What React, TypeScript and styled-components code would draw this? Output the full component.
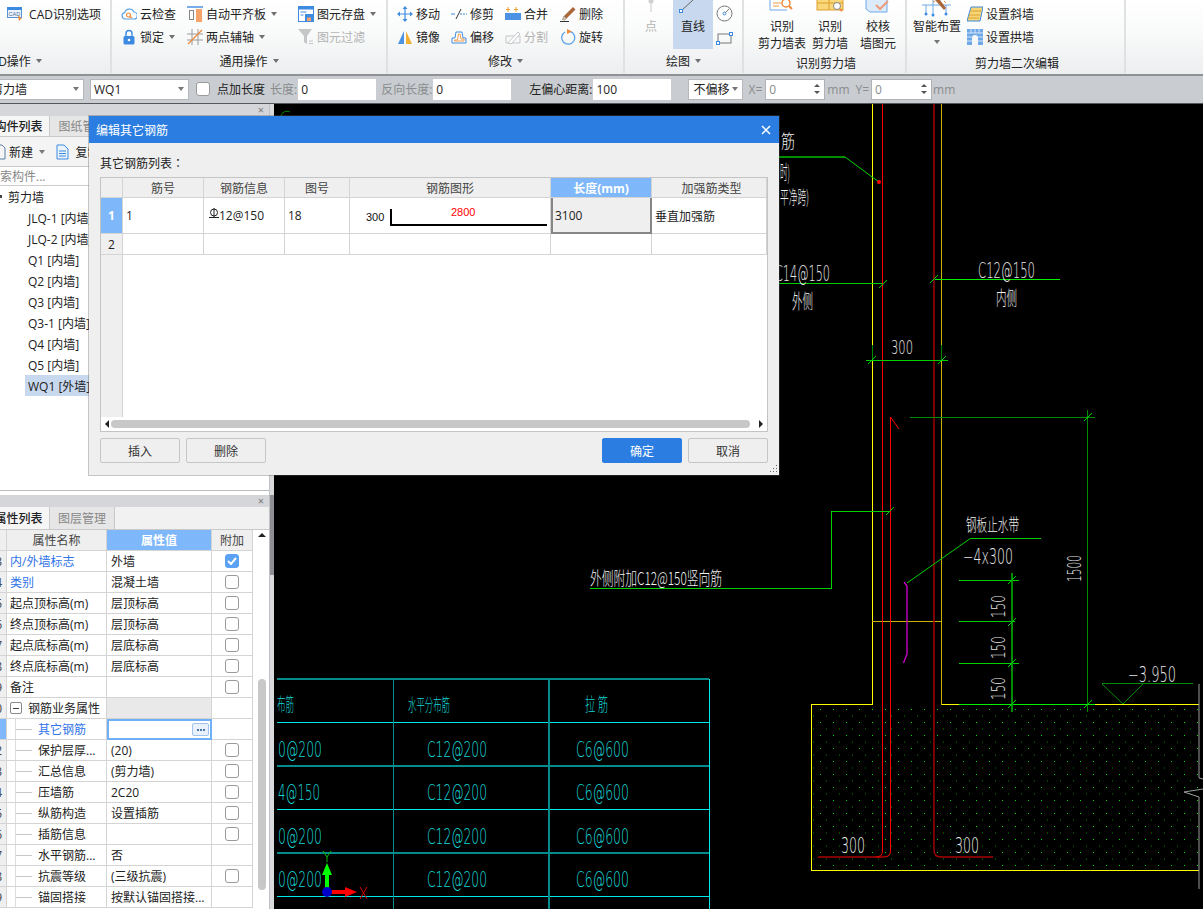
import React from "react";
import styled, { createGlobalStyle } from "styled-components";

const UI_FONT = `"Open Sans", "Noto Sans CJK SC", sans-serif`;

const Global = createGlobalStyle`
  html, body { margin: 0; padding: 0; background: #000; }
  body { font-family: ${UI_FONT}; font-size: 12px; color: #222; }
  * { box-sizing: border-box; }
`;

const Root = styled.div`
  position: relative; width: 1203px; height: 909px; overflow: hidden;
  display: flex; flex-direction: column; background: #000;
`;

/* ---------- ribbon ---------- */
const Ribbon = styled.div`
  display: flex; height: 76px; flex: none;
  background: linear-gradient(#ffffff 0%, #f9fafa 45%, #eceeef 100%);
  border-bottom: 2px solid #8f9194;
`;
const Group = styled.div<{ $w?: number }>`
  width: ${p => (p.$w ? `${p.$w}px` : "auto")}; flex: ${p => (p.$w ? "none" : 1)};
  display: flex; flex-direction: column; height: 73px;
  border-right: ${p => (p.$w ? "2px solid #dfe1e2" : "none")};
  overflow: hidden;
`;
const GroupBody = styled.div`
  height: 49px; flex: none; display: flex; align-items: flex-start;
`;
const GroupLabel = styled.div<{ $drop?: boolean; $shift?: number }>`
  display: flex; align-items: center; justify-content: center; gap: 5px;
  height: 24px; padding-top: ${p => (p.$drop ? 4 : 0)}px; padding-left: ${p => (p.$drop ? 3 : 0)}px; white-space: nowrap;
  margin-left: ${p => p.$shift ?? 0}px; width: ${p => (p.$shift ? "max-content" : "auto")};
`;
const Caret = styled.i<{ $dim?: boolean }>`
  display: inline-block; width: 0; height: 0; flex: none;
  border-left: 3.5px solid transparent; border-right: 3.5px solid transparent;
  border-top: 4px solid ${p => (p.$dim ? "#777" : "#707070")};
`;
const CaretBelow = styled(Caret)`
  margin-top: 5px;
`;
const ToolGrid = styled.div<{ $cols: string; $pad: number }>`
  display: grid; grid-template-columns: ${p => p.$cols};
  padding: 2px 0 0 ${p => p.$pad}px; grid-auto-rows: 23px;
`;
const Tool = styled.div<{ $muted?: boolean }>`
  display: flex; align-items: center; gap: 3px; white-space: nowrap;
  color: ${p => (p.$muted ? "#b4b4b4" : "#222")};
  i { margin-left: 2px; }
`;
const IconBox = styled.span`
  width: 16px; height: 16px; display: flex; align-items: center; justify-content: center; flex: none;
`;
const BigTool = styled.div<{ $w: number; $active?: boolean; $muted?: boolean }>`
  width: ${p => p.$w}px; height: 49px; flex: none;
  display: flex; flex-direction: column; align-items: center;
  background: ${p => (p.$active ? "#c8d9ef" : "transparent")};
  color: ${p => (p.$muted ? "#b4b4b4" : "#222")};
  line-height: 17px; white-space: nowrap;
`;
const BigIcon = styled.svg`
  width: 30px; height: 18px; flex: none; display: block; fill: none;
`;
const ShapeStack = styled.div`
  display: flex; flex-direction: column; gap: 10px; padding: 5px 0 0 3px;
`;
const PointSpacer = styled.div<{ $w?: number }>`
  width: ${p => p.$w ?? 4}px; flex: none;
`;
const Rows = styled.div`
  display: flex; flex-direction: column; padding-top: 2px; margin-left: 4px;
`;
const RowTool = styled(Tool)`
  height: 23px;
`;

/* ---------- option bar ---------- */
const OptionBar = styled.div`
  display: flex; align-items: center; height: 28px; flex: none; padding-bottom: 1px;
  background: #c9ccd0; border-bottom: 1px solid #55575a; white-space: nowrap;
`;
const Combo = styled.div<{ $w: number; $ml: number; $pl?: number }>`
  width: ${p => p.$w}px; margin-left: ${p => p.$ml}px; height: 21px; flex: none;
  background: #fff; border: 1px solid #b5b7ba; padding: 0 4px 0 ${p => p.$pl ?? 3}px;
  display: flex; align-items: center; justify-content: space-between;
  i { border-left-width: 3px; border-right-width: 3px; }
`;
const Check = styled.span<{ $on?: boolean; $ml?: number }>`
  display: flex; align-items: center; justify-content: center; flex: none;
  width: 14px; height: 14px; border-radius: 3px; margin-left: ${p => p.$ml ?? 0}px;
  border: 1px solid ${p => (p.$on ? "#5ba2f5" : "#9a9a9a")};
  background: ${p => (p.$on ? "#5ba2f5" : "#fff")};
`;
const BarLabel = styled.span<{ $muted?: boolean; $ml: number }>`
  margin-left: ${p => p.$ml}px; color: ${p => (p.$muted ? "#8a8c8f" : "#222")};
`;
const BarInput = styled.div<{ $w: number; $ml?: number; $muted?: boolean }>`
  width: ${p => p.$w}px; height: 21px; flex: none; margin-left: ${p => p.$ml ?? 1}px;
  background: #fff; padding: 0 3px; display: flex; align-items: center; justify-content: space-between;
  color: ${p => (p.$muted ? "#8a8c8f" : "#222")};
`;
const SpinBox = styled(BarInput)`
  border: 1px solid #b0b2b5;
`;
const SpinArrows = styled.span`
  display: flex; flex-direction: column; gap: 4px; margin-right: 1px;
  i { display: block; width: 0; height: 0; border-left: 3px solid transparent; border-right: 3px solid transparent; }
  i:first-child { border-bottom: 3px solid #555; }
  i:last-child { border-top: 3px solid #555; }
`;

/* ---------- main ---------- */
const Main = styled.div`
  display: flex; flex: 1; min-height: 0;
`;
const LeftColumn = styled.div`
  width: 269px; flex: none; display: flex; flex-direction: column; background: #fff;
`;
const Splitter = styled.div`
  width: 5px; flex: none; background: #d8dadc; border-left: 1px solid #bfc1c4;
  display: flex; flex-direction: column;
`;
const SplitThumb = styled.div`
  margin-top: 391px; height: 80px; background: #8d8f92;
`;
const Canvas = styled.svg`
  flex: 1; min-width: 0; height: 805px; display: block; background: #000;
`;
const PanelStrip = styled.div`
  height: 12px; flex: none; background: #d4d6da; display: flex; justify-content: flex-end;
  align-items: center; padding-right: 5px; color: #777; font-size: 11px; line-height: 12px;
`;
const Tabs = styled.div<{ $h: number }>`
  height: ${p => p.$h}px; flex: none; display: flex; background: #f1f1f1;
  border-bottom: 1px solid #c9c9c9;
`;
const Tab = styled.div<{ $on?: boolean; $w: number; $shift?: number }>`
  width: ${p => p.$w}px; flex: none; display: flex; align-items: center; justify-content: center;
  background: ${p => (p.$on ? "#f6f6f6" : "#e6e6e6")};
  color: ${p => (p.$on ? "#222" : "#888")}; border-right: 1px solid #c9c9c9;
  font-weight: ${p => (p.$on ? 500 : 400)}; overflow: visible; white-space: nowrap;
  margin-left: ${p => p.$shift ?? 0}px;
`;
const MiniBar = styled.div`
  height: 30px; flex: none; display: flex; align-items: center; background: #f4f4f4;
  border-bottom: 1px solid #c9c9c9; white-space: nowrap;
`;
const MiniGap = styled.span<{ $w: number }>`
  width: ${p => p.$w}px; flex: none;
`;
const SearchBox = styled.div`
  height: 19px; flex: none; display: flex; align-items: center; color: #888; background: #fff;
  border-bottom: 1px solid #ccc; margin-left: -12px; padding-left: 0;
`;
const Tree = styled.div`
  flex: none; height: 305px; background: #fff; display: flex; flex-direction: column;
  border-bottom: 1px solid #bbb;
`;
const TreeRoot = styled.div`
  height: 21px; display: flex; align-items: center; padding-left: 8px; position: relative;
  &::before { content: ""; position: absolute; left: 0; top: 9px; width: 2px; height: 3px; background: #444; }
`;
const TreeItem = styled.div<{ $on?: boolean }>`
  height: 21px; display: flex; align-items: center; padding-left: 3px; margin-left: 25px;
  background: ${p => (p.$on ? "#c8d9ef" : "transparent")}; white-space: nowrap;
`;
const Gap4 = styled.div`
  height: 4px; flex: none; background: #fff;
`;
const PropsArea = styled.div`
  flex: 1; min-height: 0; display: flex; background: #fff; overflow: hidden;
`;
const PropsTable = styled.div`
  width: 253px; flex: none; display: flex; flex-direction: column;
`;
const PropRow = styled.div`
  display: grid; grid-template-columns: 7px 100px 105px 41px; height: 21px; flex: none;
`;
const PropCell = styled.div<{ $bg?: string; $color?: string; $center?: boolean; $bold?: boolean; $pad?: number }>`
  display: flex; align-items: center; white-space: nowrap; overflow: hidden;
  justify-content: ${p => (p.$center ? "center" : "flex-start")};
  padding-left: ${p => p.$pad ?? 0}px;
  background: ${p => p.$bg ?? "#fff"}; color: ${p => p.$color ?? "#222"};
  font-weight: ${p => (p.$bold ? 700 : 400)};
  border-right: 1px solid #d4d4d4; border-bottom: 1px solid #d4d4d4;
`;
const RowNum = styled(PropCell)`
  justify-content: flex-end; padding-right: 4px; overflow: visible; background: ${p => p.$bg ?? "#efefef"};
`;
const Gutter = styled.span`
  width: 9px; height: 21px; flex: none; border-right: 1px solid #ddd;
`;
const Dash = styled.span`
  width: 16px; height: 1px; flex: none; background: #c8c8c8; margin-right: 6px;
`;
const Toggle = styled.span`
  width: 12px; height: 12px; flex: none; margin: 0 6px 0 3px; border: 1px solid #8a8a8a; border-radius: 2px;
  background: #fff; display: flex; align-items: center; justify-content: center;
  &::after { content: ""; width: 6px; height: 1px; background: #444; }
`;
const EditCell = styled.div`
  display: flex; align-items: center; justify-content: flex-end; padding-right: 1px; height: 21px;
  border: 2px solid #6fb0f6; background: #fff;
`;
const DotsBtn = styled.span`
  width: 17px; height: 13px; border: 1px solid #9fc4ee; border-radius: 2px; background: #e8f1fc;
  display: flex; align-items: center; justify-content: center; gap: 1px;
  i { width: 2px; height: 2px; background: #4a78ae; }
`;
const PropScroll = styled.div`
  width: 16px; flex: none; display: flex; flex-direction: column; align-items: center; background: #fff;
  padding-left: 2px;
`;
const ScrollUp = styled.i`
  display: block; width: 0; height: 0; margin-top: 3px;
  border-left: 4px solid transparent; border-right: 4px solid transparent; border-bottom: 4px solid #222;
`;
const ScrollThumb = styled.div`
  width: 8px; height: 211px; margin-top: 142px; border-radius: 4px; background: #c8c8c8;
`;

/* ---------- dialog ---------- */
const Dialog = styled.div`
  position: absolute; left: 89px; top: 116px; width: 690px; height: 359px;
  background: #efefef; display: flex; flex-direction: column;
  box-shadow: 0 0 0 1px rgba(90, 90, 90, 0.35);
`;
const DialogTitle = styled.div`
  height: 27px; flex: none; background: #2b7de1; color: #fff; display: flex; align-items: center;
  justify-content: space-between; padding: 0 8px 0 7px;
`;
const DialogBody = styled.div`
  flex: 1; display: flex; flex-direction: column; padding: 11px 11px 0;
`;
const ListCaption = styled.div`
  height: 18px; line-height: 18px; margin-bottom: 5px;
`;
const WideColon = styled.span`
  font-family: "Noto Sans CJK TC", sans-serif;
`;
const RebarTable = styled.div`
  height: 255px; flex: none; border: 1px solid #c4c4c4; background: #fff; display: flex; flex-direction: column;
`;
const RebarRow = styled.div<{ $h: number }>`
  display: grid; grid-template-columns: 22px 81px 81px 65px 201px 101px 1fr; height: ${p => p.$h}px; flex: none;
`;
const RebarCell = styled.div<{ $head?: boolean; $hot?: boolean; $active?: boolean; $num?: boolean; $nudge?: number }>`
  display: flex; align-items: center; white-space: nowrap; min-width: 0;
  justify-content: ${p => (p.$head || p.$num ? "center" : "flex-start")};
  padding-left: ${p => p.$nudge ?? (p.$head || p.$num ? 0 : 3)}px;
  background: ${p => (p.$hot ? "#7eb8fa" : p.$head || p.$num || p.$active ? "#efefef" : "#fff")};
  color: ${p => (p.$hot ? "#fff" : p.$head ? "#444" : "#222")};
  font-weight: ${p => (p.$hot ? 700 : 400)};
  border-right: 1px solid #d4d4d4; border-bottom: 1px solid #d4d4d4;
  ${p => (p.$active ? "border: 2px solid #868686; border-top: 0; padding-left: 2px;" : "")}
`;
const RebarFill = styled.div`
  flex: 1; display: flex; min-height: 0;
`;
const RebarFillNum = styled.div`
  width: 22px; background: #efefef; border-right: 1px solid #d4d4d4;
`;
const HScroll = styled.div`
  height: 14px; flex: none; display: flex; align-items: center; background: #fff; padding: 0 4px;
`;
const ArrowL = styled.i`
  width: 0; height: 0; flex: none; border-top: 4px solid transparent; border-bottom: 4px solid transparent; border-right: 4px solid #222;
`;
const ArrowR = styled.i`
  width: 0; height: 0; flex: none; border-top: 4px solid transparent; border-bottom: 4px solid transparent; border-left: 4px solid #222;
`;
const HThumb = styled.div`
  height: 8px; flex: 1; margin: 0 9px 0 2px; border-radius: 4px; background: #c8c8c8; max-width: 640px;
`;
const HTrack = styled.div`
  flex: 1; display: flex; align-items: center;
`;
const DialogFoot = styled.div`
  display: flex; justify-content: space-between; margin-top: 6px;
`;
const BtnGroup = styled.div`
  display: flex; gap: 6px;
`;
const DlgBtn = styled.button<{ $primary?: boolean }>`
  width: 80px; height: 25px; padding: 0; border-radius: 2px; font: inherit; font-size: 12px;
  background: ${p => (p.$primary ? "#2b7de1" : "#efefef")};
  color: ${p => (p.$primary ? "#fff" : "#333")};
  border: 1px solid ${p => (p.$primary ? "#2b7de1" : "#c6c6c6")};
`;
const Grip = styled.svg`
  position: absolute; right: 1px; bottom: 1px; width: 10px; height: 10px;
`;
const RebarSymbol = styled.svg`
  width: 10px; height: 11px; flex: none; margin: -4px 0 0 2px;
`;
const ShapeSvg = styled.svg`
  width: 197px; height: 35px; display: block;
`;
const ShapeText = styled.text`
  font-family: "Liberation Sans", sans-serif; font-size: 11px;
`;
const CadLabel = styled.text`
  font-family: "DejaVu Sans", "Noto Sans CJK SC", sans-serif; font-weight: 200;
`;
const CadHan = styled.text`
  font-family: "Noto Sans CJK SC", sans-serif; font-weight: 300;
`;

/* ---------- icons ---------- */
const S: React.FC<React.PropsWithChildren<{ w?: number; h?: number }>> = ({ w = 16, h = 16, children }) => (
  <svg width={w} height={h} viewBox={`0 0 ${w} ${h}`} fill="none">{children}</svg>
);
const IconCad = () => (
  <S h={16}>
    <rect x=".5" y="1.500" width="14" height="10" fill="#eaf2fb" stroke="#5b93d2" />
    <rect x="0" y="1" width="15" height="3" fill="#3d8be0" />
    <text x="1.500" y="10" fontSize="5.500" fontFamily="Liberation Sans, sans-serif" fill="#4d6f99">CAD</text>
    <path d="M11 9l4 4-2 .5-1 2z" fill="#ef8a3c" />
  </S>
);
const IconCloud = () => (
  <S>
    <path d="M4 13a3.200 3.200 0 0 1-.4-6.300A5 5 0 0 1 13 6a3.500 3.500 0 0 1-.5 7z" stroke="#5ba2e6" strokeWidth="1.200" fill="#fff" />
    <circle cx="7.500" cy="9" r="2" stroke="#ef8a3c" strokeWidth="1.200" />
    <path d="M9 10.500l2 1.800" stroke="#ef8a3c" strokeWidth="1.200" />
  </S>
);
const IconLock = () => (
  <S>
    <path d="M5 7V4.500a3 3 0 0 1 6 0V7" stroke="#3d8be0" strokeWidth="1.400" />
    <rect x="2.500" y="7" width="11" height="8.500" rx="1.500" fill="#3d8be0" />
    <circle cx="8" cy="11" r="1.300" fill="#fff" />
  </S>
);
const IconAlign = () => (
  <S>
    <path d="M0 1h16" stroke="#3d8be0" strokeWidth="1.400" />
    <rect x="2.500" y="4.500" width="4" height="9" stroke="#888" fill="#fff" />
    <rect x="9" y="3" width="6" height="13" fill="#f5a26b" />
  </S>
);
const IconAxis = () => (
  <S>
    <path d="M0 5h16M0 11h16M5 0v16M11 0v16" stroke="#9a9a9a" />
    <path d="M1 15L15 1" stroke="#ef8a3c" strokeWidth="1.200" />
  </S>
);
const IconSave = () => (
  <S>
    <rect x=".5" y=".5" width="15" height="15" fill="#fff" stroke="#3d8be0" />
    <rect x="0" y="0" width="16" height="3.500" fill="#3d8be0" />
    <path d="M2.500 6h6M2.500 9h3" stroke="#3d8be0" />
    <rect x="7" y="8" width="8" height="7.500" fill="#3d8be0" />
    <rect x="9" y="11.500" width="4" height="3.500" fill="#f5a26b" />
  </S>
);
const IconFilter = () => (
  <S>
    <path d="M0 0h14L9 7v8l-3-2V7z" fill="#c4c6c8" />
    <path d="M11 12h4M11 14.500h4" stroke="#c4c6c8" />
  </S>
);
const IconMove = () => (
  <S>
    <path d="M8 1v14M1 8h14" stroke="#3d8be0" strokeWidth="1.200" />
    <path d="M8 0l2.500 3h-5zM8 16l2.500-3h-5zM0 8l3-2.500v5zM16 8l-3-2.500v5z" fill="#3d8be0" />
  </S>
);
const IconTrim = () => (
  <S>
    <path d="M0 8h4" stroke="#3d8be0" />
    <path d="M5 13L10 3" stroke="#333" />
    <path d="M9 8h7" stroke="#3d8be0" strokeDasharray="2 1" />
  </S>
);
const IconMerge = () => (
  <S>
    <rect x="0" y="7" width="16" height="7" fill="#4b93e2" />
    <path d="M3 1v5M11 1v5M1 3.500h4M9 3.500h4" stroke="#f0a030" />
  </S>
);
const IconErase = () => (
  <S>
    <path d="M4 10L13 1l2.500 2.500-9 9z" fill="#a9673a" />
    <path d="M4 10l2.500 2.500-2 1.500-2-.5z" fill="#e8c9a8" stroke="#555" strokeWidth=".5" />
    <path d="M0 15.500h9" stroke="#333" />
  </S>
);
const IconMirror = () => (
  <S>
    <path d="M7 2v13H1z" fill="#4b93e2" />
    <path d="M9 2v13h6z" fill="#f2b134" />
  </S>
);
const IconOffset = () => (
  <S>
    <path d="M1 14V9h3l1-6h6l1 6h3v5z" stroke="#3d8be0" fill="#fff" />
    <path d="M3.500 12v-1h3l1-6h1.500l1 5h3v2z" stroke="#ef9a4c" fill="#fff" />
  </S>
);
const IconSplit = () => (
  <S>
    <path d="M1 14V7h14v7z" stroke="#c4c6c8" />
    <path d="M3 14l10-11 2 2L6 15z" stroke="#c4c6c8" fill="#fff" />
  </S>
);
const IconRotate = () => (
  <S>
    <path d="M5 3a6.500 6.500 0 1 0 5-.6" stroke="#5ba2e6" strokeWidth="1.300" />
    <path d="M7 0l5 2.500-5 2.500z" fill="#ef8a3c" />
  </S>
);
const IconCircle = () => (
  <S w={17} h={17}>
    <circle cx="8.500" cy="8.500" r="7.500" stroke="#777" />
    <circle cx="8.500" cy="8.500" r="1.400" stroke="#3d8be0" />
    <path d="M9.500 7.500L13 4" stroke="#777" />
  </S>
);
const IconRect = () => (
  <S w={17} h={13}>
    <rect x="2" y="2" width="13" height="9" stroke="#777" />
    <rect x=".5" y="9.500" width="3" height="3" fill="#fff" stroke="#3d8be0" />
    <rect x="13.500" y=".5" width="3" height="3" fill="#fff" stroke="#3d8be0" />
  </S>
);
const IconSkew = () => (
  <S>
    <path d="M4 1h12l-3 14H0z" fill="#f6d676" stroke="#3d8be0" />
    <path d="M3 5h11M2 9h11M1 12h11" stroke="#e0a030" />
  </S>
);
const IconArch = () => (
  <S>
    <path d="M0 0h16v16h-5V9a3 3 0 0 0-6 0v7H0z" fill="#6ea8e8" />
    <path d="M0 4h16M0 8h5M11 8h5M0 12h5M11 12h5M4 0v4M8 0v4M12 0v4" stroke="#fff" strokeWidth=".7" />
  </S>
);
const CheckMark = () => (
  <svg width="10" height="8" viewBox="0 0 10 8" fill="none"><path d="M1 4l3 3 5-6" stroke="#fff" strokeWidth="2" /></svg>
);
const NewIcon = () => (
  <S w={6} h={16}><path d="M-6 1h8l3 3v11H-6z" stroke="#5b7fa8" /></S>
);
const CopyIcon = () => (
  <S w={13} h={16}>
    <path d="M1 1h7l4 4v10H1z" stroke="#3d8be0" fill="#eaf2fb" />
    <path d="M3 7h7M3 9.500h7M3 12h7" stroke="#3d8be0" />
  </S>
);

/* ---------- CAD text helper ---------- */
type CT = { x: number; y: number; w: number; s: number; c?: string; r?: boolean; children: React.ReactNode };
const T: React.FC<CT> = ({ x, y, w, s, c = "#e8e8e8", r, children }) => (
  <CadLabel
    x={r ? 0 : x} y={r ? 0 : y} fontSize={s} fill={c} textLength={w} lengthAdjust="spacingAndGlyphs"
    transform={r ? `translate(${x} ${y}) rotate(-90)` : undefined}
  >{children}</CadLabel>
);
const H: React.FC<CT> = ({ x, y, w, s, c = "#f2f2f2", children }) => (
  <CadHan x={x} y={y} fontSize={s} fill={c} textLength={w} lengthAdjust="spacingAndGlyphs">{children}</CadHan>
);

const CY = "#16d8d8";
const TEAL = "#048c8c";
const CYB = "#00e8e8";
const G = "#00d000";
const GB = "#00f000";
const GD = "#008c00";
const Y = "#ffff00";
const YD = "#c8b400";
const R = "#ff0000";
const RD = "#a00000";

const Tick: React.FC<{ x: number; y: number; c?: string }> = ({ x, y, c = G }) => (
  <path d={`M${x - 4} ${y + 4}L${x + 4} ${y - 4}`} stroke={c} fill="none" />
);

const Drawing = () => (
  <Canvas viewBox="274 104 929 805" preserveAspectRatio="none">
    <defs>
      <pattern id="soil" width="13" height="13" patternUnits="userSpaceOnUse" patternTransform="translate(1 5)">
        <rect x="0" y="2" width="1" height="1" fill="#00e000" />
        <rect x="6" y="8.500" width="1" height="1" fill="#008a00" />
      </pattern>
    </defs>
    <path d="M281 116a6 5 0 0 1 9-4" stroke={GD} fill="none" />

    {/* soil */}
    <rect x="812" y="705" width="387" height="165" fill="url(#soil)" />

    {/* walls */}
    <g fill="none" shapeRendering="crispEdges">
      <path d="M872.500 104V704.500H811V870H1199" stroke={Y} />
      <path d="M941.500 104V704.500" stroke={YD} />
      <path d="M872 621.500H942" stroke={YD} />
      <path d="M942 704.500H959M1095 704.500H1199" stroke={Y} />
      <path d="M959 704.500H1095" stroke={GB} />
    </g>
    <g fill="none">
      <path d="M882.500 104V851Q882.500 857 876 857H818" stroke={R} />
      <path d="M890.500 417V851Q890.500 857 884 857H876" stroke={R} />
      <path d="M890.500 417L899 429" stroke={R} />
      <path d="M934 104V850Q934 857 941 857" stroke={RD} strokeWidth="1.500" />
      <path d="M941 857H993" stroke={R} />
    </g>

    {/* leaders */}
    <g fill="none" shapeRendering="crispEdges">
      <path d="M779 157H845" stroke={GD} strokeWidth="2" />
      <path d="M775 283.500H882" stroke={G} />
      <path d="M935 279.500H1060" stroke={GB} />
      <path d="M866 360.500H948" stroke={G} />
      <path d="M872.500 345V360M941.500 345V360" stroke={GD} />
      <path d="M910 417.500H1095" stroke={GD} />
      <path d="M1087.500 410V712" stroke={GD} strokeWidth="1" />
      <path d="M590 588.500H831.500V511.500H890" stroke={G} />
      <path d="M971 538.500H1041" stroke={G} />
      <path d="M959 580.500H1019M959 621.500H1015M959 663H1019" stroke={G} />
      <path d="M1012 573V712" stroke={GD} strokeWidth="2" />
      <path d="M1102 683.500H1193" stroke={GD} />
    </g>
    <g fill="none">
      <path d="M845 157L879 182" stroke={G} />
      <path d="M907 583L971 538" stroke={G} />
      <path d="M1102 684L1123 704L1143 684" stroke={GD} />
      <path d="M904 582L907 586V654L903.500 663" stroke="#d000d0" strokeWidth="1.300" />
      <path d="M1199 684V778L1203 779M1203 789L1184 792L1199 797V889" stroke="#9c9c9c" />
    </g>
    <circle cx="879" cy="182" r="2" fill={R} />
    <Tick x={883} y={284} /><Tick x={934} y={279} />
    <Tick x={872} y={360} /><Tick x={942} y={360} /><Tick x={890} y={511} />
    <Tick x={1088} y={417} /><Tick x={1012} y={580} /><Tick x={1012} y={622} /><Tick x={1012} y={663} />
    <Tick x={1012} y={704} /><Tick x={1088} y={704} />

    {/* white notes */}
    <H x={781} y={148} w={14} s={18}>筋</H>
    <H x={780} y={180} w={10} s={20}>时)</H>
    <H x={780} y={204} w={29} s={18}>平净跨)</H>
    <T x={775} y={281} w={55} s={21}>C14@150</T>
    <T x={978} y={278} w={57} s={21}>C12@150</T>
    <H x={792} y={309} w={21} s={20}>外侧</H>
    <H x={996} y={306} w={21} s={20}>内侧</H>
    <T x={891} y={354} w={22} s={20}>300</T>
    <H x={590} y={585} w={132} s={18}>外侧附加C12@150竖向筋</H>
    <H x={966} y={531} w={53} s={17}>钢板止水带</H>
    <T x={963} y={564} w={50} s={21}>−4x300</T>
    <T x={1005} y={618} w={23} s={20} r>150</T>
    <T x={1005} y={659} w={23} s={20} r>150</T>
    <T x={1005} y={700} w={23} s={20} r>150</T>
    <T x={1081} y={582} w={27} s={20} r>1500</T>
    <T x={1128} y={682} w={48} s={21}>−3.950</T>
    <T x={841} y={853} w={24} s={21}>300</T>
    <T x={955} y={853} w={24} s={21}>300</T>

    {/* schedule table */}
    <g fill="none" shapeRendering="crispEdges">
      <path d="M277 679H709M277 766H709M277 853H709" stroke={TEAL} strokeWidth="2" />
      <path d="M277 722.500H709M277 809.500H709M277 896.500H709" stroke={CYB} />
      <path d="M393.500 679V909M549 679V909" stroke={TEAL} strokeWidth="1.500" />
      <path d="M709.500 679V909" stroke={CYB} />
    </g>
    <H x={277} y={711} w={17} s={18} c={CY}>布筋</H>
    <H x={408} y={711} w={42} s={17} c={CY}>水平分布筋</H>
    <H x={585} y={711} w={23} s={18} c={CY}>拉 筋</H>
    {[757, 800, 844, 887].map((y, i) => (
      <React.Fragment key={y}>
        <T x={278} y={y} w={i === 1 ? 42 : 44} s={22} c={CY}>{i === 1 ? "4@150" : "0@200"}</T>
        <T x={427} y={y} w={60} s={22} c={CY}>C12@200</T>
        <T x={576} y={y} w={53} s={22} c={CY}>C6@600</T>
      </React.Fragment>
    ))}

    {/* UCS */}
    <path d="M327 892V874" stroke="#00ff00" strokeWidth="4" />
    <path d="M327 863L332 875H322z" fill="#00ff00" />
    <path d="M327 892H349" stroke="#ff0000" strokeWidth="4" />
    <path d="M357 892L345 887V897z" fill="#ff0000" />
    <circle cx="327" cy="892" r="5" fill="#0000c8" />
    <path d="M323 851L327 857L331 851M327 857V862" stroke="#00c000" fill="none" />
    <path d="M360 887L367 899M367 887L360 899" stroke="#e00000" fill="none" />
  </Canvas>
);

/* ---------- data ---------- */
const treeItems = ["JLQ-1 [内墙]", "JLQ-2 [内墙]", "Q1 [内墙]", "Q2 [内墙]", "Q3 [内墙]", "Q3-1 [内墙]", "Q4 [内墙]", "Q5 [内墙]", "WQ1 [外墙]"];
type P = { n: string; name: string; val?: string; blue?: boolean; box?: boolean; on?: boolean; child?: boolean; group?: boolean; edit?: boolean };
const props: P[] = [
  { n: "3", name: "内/外墙标志", val: "外墙", blue: true, box: true, on: true },
  { n: "4", name: "类别", val: "混凝土墙", blue: true, box: true },
  { n: "5", name: "起点顶标高(m)", val: "层顶标高", box: true },
  { n: "6", name: "终点顶标高(m)", val: "层顶标高", box: true },
  { n: "7", name: "起点底标高(m)", val: "层底标高", box: true },
  { n: "8", name: "终点底标高(m)", val: "层底标高", box: true },
  { n: "9", name: "备注", box: true },
  { n: "10", name: "钢筋业务属性", group: true },
  { n: "11", name: "其它钢筋", blue: true, child: true, edit: true },
  { n: "12", name: "保护层厚...", val: "(20)", child: true, box: true },
  { n: "13", name: "汇总信息", val: "(剪力墙)", child: true, box: true },
  { n: "14", name: "压墙筋", val: "2C20", child: true, box: true },
  { n: "15", name: "纵筋构造", val: "设置插筋", child: true, box: true },
  { n: "16", name: "插筋信息", child: true, box: true },
  { n: "17", name: "水平钢筋...", val: "否", child: true },
  { n: "18", name: "抗震等级", val: "(三级抗震)", child: true, box: true },
  { n: "19", name: "锚固搭接", val: "按默认锚固搭接...", child: true },
];

export default function App() {
  return (
    <Root>
      <Global />
      <Ribbon>
        <Group $w={112}>
          <GroupBody>
            <ToolGrid $cols="100px" $pad={7}>
              <Tool><IconBox><IconCad /></IconBox>&nbsp;CAD识别选项</Tool>
            </ToolGrid>
          </GroupBody>
          <GroupLabel $shift={-17}>CAD操作 <Caret /></GroupLabel>
        </Group>
        <Group $w={276}>
          <GroupBody>
            <ToolGrid $cols="66px 111px 80px" $pad={9}>
              <Tool><IconBox><IconCloud /></IconBox>云检查</Tool>
              <Tool><IconBox><IconAlign /></IconBox>自动平齐板<Caret /></Tool>
              <Tool><IconBox><IconSave /></IconBox>图元存盘<Caret /></Tool>
              <Tool><IconBox><IconLock /></IconBox>锁定<Caret /></Tool>
              <Tool><IconBox><IconAxis /></IconBox>两点辅轴<Caret /></Tool>
              <Tool $muted><IconBox><IconFilter /></IconBox>图元过滤</Tool>
            </ToolGrid>
          </GroupBody>
          <GroupLabel>通用操作 <Caret /></GroupLabel>
        </Group>
        <Group $w={237}>
          <GroupBody>
            <ToolGrid $cols="54px 54px 55px 50px" $pad={9}>
              <Tool><IconBox><IconMove /></IconBox>移动</Tool>
              <Tool><IconBox><IconTrim /></IconBox>修剪</Tool>
              <Tool><IconBox><IconMerge /></IconBox>合并</Tool>
              <Tool><IconBox><IconErase /></IconBox>删除</Tool>
              <Tool><IconBox><IconMirror /></IconBox>镜像</Tool>
              <Tool><IconBox><IconOffset /></IconBox>偏移</Tool>
              <Tool $muted><IconBox><IconSplit /></IconBox>分割</Tool>
              <Tool><IconBox><IconRotate /></IconBox>旋转</Tool>
            </ToolGrid>
          </GroupBody>
          <GroupLabel>修改 <Caret /></GroupLabel>
        </Group>
        <Group $w={119}>
          <GroupBody>
            <PointSpacer />
            <BigTool $w={44} $muted>
              <BigIcon viewBox="0 0 30 18"><path d="M15 0v12" stroke="#c8c8c8" /><circle cx="15" cy="1" r="2.500" fill="#d0d0d0" /></BigIcon>
              点
            </BigTool>
            <BigTool $w={40} $active>
              <BigIcon viewBox="0 0 30 18"><path d="M4 10L15 0" stroke="#666" /><rect x="1.500" y="9.500" width="3" height="3" fill="#fff" stroke="#3d8be0" /></BigIcon>
              直线
            </BigTool>
            <ShapeStack><IconCircle /><IconRect /></ShapeStack>
          </GroupBody>
          <GroupLabel>绘图 <Caret /></GroupLabel>
        </Group>
        <Group $w={163}>
          <GroupBody>
            <PointSpacer $w={14} />
            <BigTool $w={48}>
              <BigIcon viewBox="0 0 30 18">
                <path d="M3 0v10h17" stroke="#6ea8e8" /><path d="M6 3h8M6 6h6" stroke="#ef9a4c" />
                <circle cx="19" cy="3" r="4" stroke="#ef8a3c" strokeWidth="1.500" fill="#fff" /><path d="M22 6l3 3" stroke="#ef8a3c" strokeWidth="2" />
              </BigIcon>
              <span>识别</span><span>剪力墙表</span>
            </BigTool>
            <BigTool $w={48}>
              <BigIcon viewBox="0 0 30 18">
                <rect x="2" y="-4" width="26" height="14" fill="#f8d878" stroke="#e0a030" /><path d="M2 3h26M14 -4v14" stroke="#e0a030" />
                <circle cx="22" cy="6" r="3.500" stroke="#888" fill="#fff" /><path d="M25 9l2 2" stroke="#ef8a3c" strokeWidth="2" />
              </BigIcon>
              <span>识别</span><span>剪力墙</span>
            </BigTool>
            <BigTool $w={48}>
              <BigIcon viewBox="0 0 30 18">
                <path d="M3 -1v10l4 3h17V-1z" fill="#dcebfa" stroke="#6ea8e8" />
                <path d="M13 5l4 4 8-8" stroke="#ef9a7c" strokeWidth="2" fill="none" />
              </BigIcon>
              <span>校核</span><span>墙图元</span>
            </BigTool>
          </GroupBody>
          <GroupLabel $drop>识别剪力墙</GroupLabel>
        </Group>
        <Group $w={219}>
          <GroupBody>
            <PointSpacer />
            <BigTool $w={52}>
              <BigIcon viewBox="0 0 30 18">
                <path d="M0 5h29M11 0v15M4 5v9M24 5v9" stroke="#6ea8e8" />
                <path d="M13 0h5l6 8-2 2z" fill="#a9673a" />
                <circle cx="4" cy="14" r="1.500" fill="#3d8be0" /><circle cx="11" cy="15" r="1.500" fill="#3d8be0" /><circle cx="24" cy="14" r="1.500" fill="#3d8be0" />
                <path d="M22 1l2 2M11 1l2 1" stroke="#ef8a3c" />
              </BigIcon>
              <span>智能布置</span>
              <CaretBelow $dim />
            </BigTool>
            <Rows>
              <RowTool><IconBox><IconSkew /></IconBox>设置斜墙</RowTool>
              <RowTool><IconBox><IconArch /></IconBox>设置拱墙</RowTool>
            </Rows>
          </GroupBody>
          <GroupLabel $drop>剪力墙二次编辑</GroupLabel>
        </Group>
        <Group />
      </Ribbon>

      <OptionBar>
        <Combo $w={97} $ml={-13}><span>剪力墙</span><Caret $dim /></Combo>
        <Combo $w={99} $ml={6}><span>WQ1</span><Caret $dim /></Combo>
        <Check $ml={7} />
        <BarLabel $ml={7}>点加长度</BarLabel>
        <BarLabel $ml={5} $muted>长度:</BarLabel>
        <BarInput $w={78}>0</BarInput>
        <BarLabel $ml={5} $muted>反向长度:</BarLabel>
        <BarInput $w={78}>0</BarInput>
        <BarLabel $ml={18}>左偏心距离:</BarLabel>
        <BarInput $w={78}>100</BarInput>
        <Combo $w={55} $ml={17} $pl={4}><span>不偏移</span><Caret $dim /></Combo>
        <BarLabel $ml={5} $muted>X=</BarLabel>
        <SpinBox $w={60} $ml={3} $muted>0<SpinArrows><i /><i /></SpinArrows></SpinBox>
        <BarLabel $ml={2} $muted>mm</BarLabel>
        <BarLabel $ml={6} $muted>Y=</BarLabel>
        <SpinBox $w={61} $ml={2} $muted>0<SpinArrows><i /><i /></SpinArrows></SpinBox>
        <BarLabel $ml={1} $muted>mm</BarLabel>
      </OptionBar>

      <Main>
        <LeftColumn>
          <PanelStrip>×</PanelStrip>
          <Tabs $h={21}>
            <Tab $on $w={62} $shift={-12}>构件列表</Tab>
            <Tab $w={66}>图纸管理</Tab>
          </Tabs>
          <MiniBar>
            <NewIcon />
            <span>&nbsp;新建&nbsp;&nbsp;</span><Caret $dim />
            <MiniGap $w={11} />
            <CopyIcon />
            <span>&nbsp;&nbsp;复制</span>
          </MiniBar>
          <SearchBox>搜索构件...</SearchBox>
          <Tree>
            <TreeRoot>剪力墙</TreeRoot>
            {treeItems.map((t, i) => <TreeItem key={t} $on={i === 8}>{t}</TreeItem>)}
          </Tree>
          <Gap4 />
          <PanelStrip>×</PanelStrip>
          <Tabs $h={23}>
            <Tab $on $w={62} $shift={-12}>属性列表</Tab>
            <Tab $w={65}>图层管理</Tab>
          </Tabs>
          <PropsArea>
            <PropsTable>
              <PropRow>
                <RowNum />
                <PropCell $bg="#efefef" $color="#444" $center>属性名称</PropCell>
                <PropCell $bg="#7eb8fa" $color="#fff" $center $bold>属性值</PropCell>
                <PropCell $bg="#efefef" $color="#444" $center>附加</PropCell>
              </PropRow>
              {props.map(p => (
                <PropRow key={p.n}>
                  <RowNum $bg={p.edit ? "#7eb8fa" : undefined} $color={p.edit ? "#fff" : "#444"}>{p.n}</RowNum>
                  {p.group ? (
                    <PropCell><Toggle />{p.name}</PropCell>
                  ) : (
                    <PropCell $pad={p.child ? 0 : 3} $color={p.blue ? "#2f74e6" : "#222"}>
                      {p.child && <><Gutter /><Dash /></>}
                      {p.name}
                    </PropCell>
                  )}
                  {p.edit ? (
                    <EditCell><DotsBtn><i /><i /><i /></DotsBtn></EditCell>
                  ) : (
                    <PropCell $pad={4} $bg={p.group ? "#e9e9e9" : "#fff"}>{p.val}</PropCell>
                  )}
                  <PropCell $center>{p.box && <Check $on={p.on}>{p.on && <CheckMark />}</Check>}</PropCell>
                </PropRow>
              ))}
            </PropsTable>
            <PropScroll>
              <ScrollUp />
              <ScrollThumb />
            </PropScroll>
          </PropsArea>
        </LeftColumn>
        <Splitter><SplitThumb /></Splitter>
        <Drawing />
      </Main>

      <Dialog>
        <DialogTitle>
          <span>编辑其它钢筋</span>
          <svg width="10" height="10" viewBox="0 0 10 10"><path d="M1 1l8 8M9 1L1 9" stroke="#fff" strokeWidth="1.500" /></svg>
        </DialogTitle>
        <DialogBody>
          <ListCaption>其它钢筋列表<WideColon>：</WideColon></ListCaption>
          <RebarTable>
            <RebarRow $h={20}>
              <RebarCell $head />
              <RebarCell $head>筋号</RebarCell>
              <RebarCell $head>钢筋信息</RebarCell>
              <RebarCell $head>图号</RebarCell>
              <RebarCell $head>钢筋图形</RebarCell>
              <RebarCell $head $hot>长度(mm)</RebarCell>
              <RebarCell $head $nudge={5}>加强筋类型</RebarCell>
            </RebarRow>
            <RebarRow $h={36}>
              <RebarCell $num $hot>1</RebarCell>
              <RebarCell>1</RebarCell>
              <RebarCell>
                <RebarSymbol viewBox="0 0 10 11" fill="none">
                  <circle cx="5" cy="4.500" r="3.500" stroke="#222" />
                  <path d="M5 0v9M0 9.500h10" stroke="#222" />
                </RebarSymbol>
                12@150
              </RebarCell>
              <RebarCell>18</RebarCell>
              <RebarCell>
                <ShapeSvg viewBox="353 198 197 35">
                  <ShapeText x="366" y="221" fill="#111">300</ShapeText>
                  <ShapeText x="451" y="216" fill="#ff0000">2800</ShapeText>
                  <path d="M391 209V225H547" stroke="#000" strokeWidth="2" fill="none" />
                </ShapeSvg>
              </RebarCell>
              <RebarCell $active>3100</RebarCell>
              <RebarCell>垂直加强筋</RebarCell>
            </RebarRow>
            <RebarRow $h={21}>
              <RebarCell $num>2</RebarCell>
              <RebarCell /><RebarCell /><RebarCell /><RebarCell /><RebarCell /><RebarCell />
            </RebarRow>
            <RebarFill><RebarFillNum /></RebarFill>
            <HScroll>
              <ArrowL />
              <HTrack><HThumb /></HTrack>
              <ArrowR />
            </HScroll>
          </RebarTable>
          <DialogFoot>
            <BtnGroup><DlgBtn>插入</DlgBtn><DlgBtn>删除</DlgBtn></BtnGroup>
            <BtnGroup><DlgBtn $primary>确定</DlgBtn><DlgBtn>取消</DlgBtn></BtnGroup>
          </DialogFoot>
        </DialogBody>
        <Grip viewBox="0 0 10 10">
          <path d="M8 1h1v1H8zM5 4h1v1H5zM8 4h1v1H8zM2 7h1v1H2zM5 7h1v1H5zM8 7h1v1H8z" fill="#666" />
        </Grip>
      </Dialog>
    </Root>
  );
}
